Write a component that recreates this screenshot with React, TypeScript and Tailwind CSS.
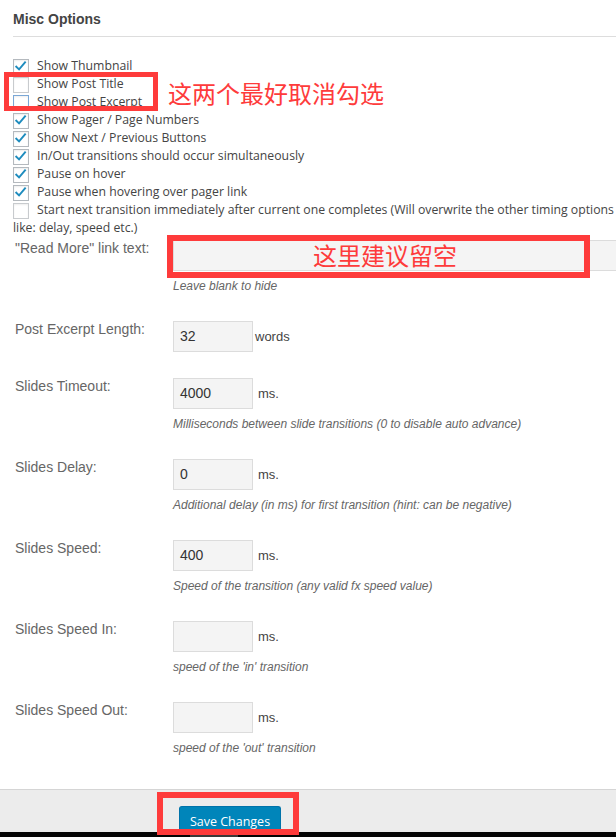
import React from 'react';

type CheckOpt = { label: React.ReactNode; checked: boolean; focus?: boolean };

const checkOptions: CheckOpt[] = [
  { label: 'Show Thumbnail', checked: true },
  { label: 'Show Post Title', checked: false },
  { label: 'Show Post Excerpt', checked: false, focus: true },
  { label: 'Show Pager / Page Numbers', checked: true },
  { label: 'Show Next / Previous Buttons', checked: true },
  { label: 'In/Out transitions should occur simultaneously', checked: true },
  { label: 'Pause on hover', checked: true },
  { label: 'Pause when hovering over pager link', checked: true },
  {
    label: (
      <>
        <span className="whitespace-nowrap">
          Start next transition immediately after current one completes (Will overwrite the other timing options
        </span>
        <br />
        like: delay, speed etc.)
      </>
    ),
    checked: false,
  },
];

type NumRow = { label: string; value: string; suffix: string; desc?: string };

const numRows: NumRow[] = [
  { label: 'Post Excerpt Length:', value: '32', suffix: 'words' },
  { label: 'Slides Timeout:', value: '4000', suffix: 'ms.', desc: 'Milliseconds between slide transitions (0 to disable auto advance)' },
  { label: 'Slides Delay:', value: '0', suffix: 'ms.', desc: 'Additional delay (in ms) for first transition (hint: can be negative)' },
  { label: 'Slides Speed:', value: '400', suffix: 'ms.', desc: 'Speed of the transition (any valid fx speed value)' },
  { label: 'Slides Speed In:', value: '', suffix: 'ms.', desc: "speed of the 'in' transition" },
  { label: 'Slides Speed Out:', value: '', suffix: 'ms.', desc: "speed of the 'out' transition" },
];

function Checkbox({ checked, focus }: { checked: boolean; focus?: boolean }) {
  return (
    <span
      className={`inline-block align-top mt-[2px] mr-[8px] w-4 h-4 bg-white border ${
        focus ? 'border-[#7aa7d6]' : checked ? 'border-[#b4b9be]' : 'border-[#c8cbce]'
      } shadow-[inset_0_1px_2px_rgba(0,0,0,0.07)]`}
    >
      {checked && (
        <svg viewBox="0 0 16 16" className="w-[14px] h-[14px]">
          <path d="M2.6 7.6 L5.8 10.8 L12.6 2.8" fill="none" stroke="#1e8cbe" strokeWidth="2.2" strokeLinecap="square" />
        </svg>
      )}
    </span>
  );
}

function FieldRow({ row }: { row: NumRow }) {
  return (
    <div className={`flex ${row.desc ? 'h-[81px]' : 'h-[57px]'}`}>
      <div className="w-[160px] shrink-0 pl-[2px] text-[14px] leading-4 text-[#666] font-['Liberation_Sans',Arial,sans-serif]">
        {row.label}
      </div>
      <div>
        <div className="flex items-center">
          <div className="w-[80px] h-[31px] bg-[#f4f4f4] border border-[#dcdcdc] pl-[6px] flex items-center text-[14px] text-[#333] font-['Liberation_Sans',Arial,sans-serif]">
            {row.value}
          </div>
          <span
            className={`${row.suffix === 'words' ? 'ml-[2px]' : 'ml-[5px]'} text-[13px] text-[#444] font-['Liberation_Sans',Arial,sans-serif] pt-[1px]`}
          >
            {row.suffix}
          </span>
        </div>
        {row.desc && (
          <p className="mt-[7px] text-[12px] leading-4 italic text-[#666] font-['Liberation_Sans',Arial,sans-serif]">
            {row.desc}
          </p>
        )}
      </div>
    </div>
  );
}

export default function App() {
  return (
    <div className="relative w-[616px] h-[837px] overflow-hidden bg-white flex flex-col">
      <div className="pl-[13px]">
        {/* Section heading */}
        <h2 className="pt-[11px] pb-[9px] border-b border-[#dddddd] text-[14px] leading-4 font-bold text-[#444] font-['Liberation_Sans',Arial,sans-serif]">
          Misc Options
        </h2>

        {/* Checkbox options */}
        <div className="mt-[20px] text-[12.25px] leading-[18px] text-[#444] font-['Open_Sans',sans-serif]">
          {checkOptions.map((opt, i) => (
            <label key={i} className="block">
              <Checkbox checked={opt.checked} focus={opt.focus} />
              {opt.label}
            </label>
          ))}
        </div>

        {/* Form table */}
        <div className="mt-[3px]">
          <div className="flex h-[81px]">
            <div className="w-[160px] shrink-0 pl-[2px] text-[14px] leading-4 text-[#666] font-['Liberation_Sans',Arial,sans-serif]">
              "Read More" link text:
            </div>
            <div>
              <div className="w-[460px] h-[31px] bg-[#f4f4f4] border border-[#dcdcdc]" />
              <p className="mt-[7px] text-[12px] leading-4 italic text-[#666] font-['Liberation_Sans',Arial,sans-serif]">
                Leave blank to hide
              </p>
            </div>
          </div>
          {numRows.map((row) => (
            <FieldRow key={row.label} row={row} />
          ))}
        </div>
      </div>

      {/* Footer */}
      <div className="mt-[6px] h-[43px] overflow-hidden border-t border-[#d5d5d5] bg-[#ececec] pl-[179px]">
        <button className="mt-[16px] w-[102px] h-[30px] rounded-[3px] bg-[#0085ba] border border-[#0073aa] border-b-[#006799] text-white text-[12.5px] font-['Open_Sans',sans-serif] leading-none pt-[2px]">
          Save Changes
        </button>
      </div>
      <div className="h-[5px] bg-[#050505] flex">
        <div className="w-[190px]" />
        <div className="w-[48px] bg-[#3a3a3a]" />
      </div>

      {/* Annotations */}
      <div className="absolute left-[4px] top-[72px] w-[154px] h-[39px] border-[5px] border-[#fe3b3b]" />
      <div className="absolute left-[168px] top-[81px] text-[24px] leading-none text-[#fe3b3b] font-['Noto_Sans_CJK_SC',sans-serif]">
        这两个最好取消勾选
      </div>
      <div className="absolute left-[167px] top-[235px] w-[423px] h-[43px] border-[6px] border-[#fe3b3b]" />
      <div className="absolute left-[313px] top-[243px] text-[24px] leading-none text-[#fe3b3b] font-['Noto_Sans_CJK_SC',sans-serif]">
        这里建议留空
      </div>
      <div className="absolute left-[157px] top-[792px] w-[142px] h-[43px] border-[6px] border-[#fe3b3b]" />
    </div>
  );
}
